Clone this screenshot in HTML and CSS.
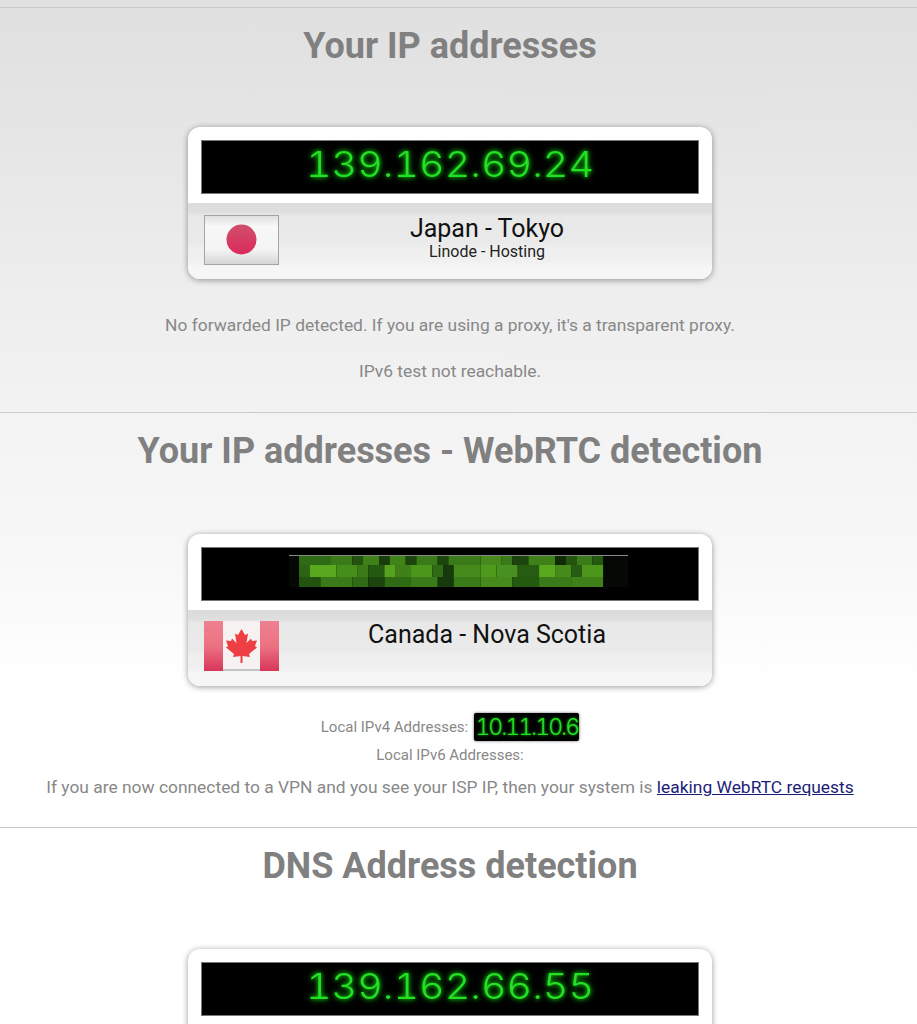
FILE: index.html
```html
<!DOCTYPE html>
<html lang="en">

<head>
  <meta charset="UTF-8" />
  <meta name="viewport" content="width=device-width, initial-scale=1.0" />
  <title>Your IP addresses</title>
  <link rel="stylesheet" href="styles.css">
</head>

<body>
  <div class="page">

    <!-- Browser IP -->
    <section class="block">
      <h2>Your IP addresses</h2>
      <div class="card">
        <div class="screen"><span class="digits">139.162.69.24</span></div>
        <div class="info">
          <svg class="flag" viewBox="0 0 75 50">
            <defs>
              <linearGradient id="jp-bg" x1="0" y1="0" x2="0" y2="1">
                <stop offset="0" stop-color="#dedede" />
                <stop offset="0.22" stop-color="#f8f8f8" />
                <stop offset="0.7" stop-color="#f4f4f4" />
                <stop offset="1" stop-color="#d4d4d4" />
              </linearGradient>
              <linearGradient id="jp-sun" x1="0" y1="0" x2="0" y2="1">
                <stop offset="0" stop-color="#d14f6c" />
                <stop offset="1" stop-color="#dc2a5c" />
              </linearGradient>
            </defs>
            <rect x="0.5" y="0.5" width="74" height="49" fill="url(#jp-bg)" stroke="#a4a4a4" />
            <circle cx="37.5" cy="24.5" r="15" fill="url(#jp-sun)" />
          </svg>
          <div class="place">
            <p class="country">Japan - Tokyo</p>
            <p class="isp">Linode - Hosting</p>
          </div>
        </div>
      </div>
      <p class="note note-first">No forwarded IP detected. If you are using a proxy, it's a transparent proxy.</p>
      <p class="note note-second">IPv6 test not reachable.</p>
    </section>

    <!-- WebRTC -->
    <section class="block block-webrtc">
      <h2>Your IP addresses - WebRTC detection</h2>
      <div class="card">
        <div class="screen">
          <svg class="blur" viewBox="0 0 339 34">
            <rect x="0" y="2" width="339" height="1" fill="#8a8a8a" />
            <rect x="0" y="3" width="339" height="31" fill="#050805" />
            <g class="pixels" transform="translate(10 0) scale(1.067 1) translate(-10 0)">
              <rect x="10" y="3" width="30" height="9" fill="#2f6a14" /><rect x="40" y="3" width="20" height="9" fill="#3a7a18" /><rect x="60" y="3" width="10" height="9" fill="#24520f" /><rect x="70" y="3" width="15" height="9" fill="#3f8019" /><rect x="85" y="3" width="10" height="9" fill="#183c0b" /><rect x="95" y="3" width="15" height="9" fill="#3f8419" /><rect x="110" y="3" width="10" height="9" fill="#1c440d" /><rect x="120" y="3" width="20" height="9" fill="#3a7a18" /><rect x="140" y="3" width="10" height="9" fill="#1c440d" /><rect x="150" y="3" width="30" height="9" fill="#3a7a18" /><rect x="180" y="3" width="20" height="9" fill="#458a1a" /><rect x="200" y="3" width="10" height="9" fill="#3a7a18" /><rect x="210" y="3" width="15" height="9" fill="#1c440d" /><rect x="225" y="3" width="25" height="9" fill="#3f8019" /><rect x="250" y="3" width="10" height="9" fill="#0f2c07" /><rect x="260" y="3" width="10" height="9" fill="#24520f" /><rect x="270" y="3" width="15" height="9" fill="#3a7a18" /><rect x="285" y="3" width="10" height="9" fill="#245a10" />
              <rect x="10" y="12" width="10" height="12" fill="#2d6414" /><rect x="20" y="12" width="25" height="12" fill="#5aa81e" /><rect x="45" y="12" width="20" height="12" fill="#468e1b" /><rect x="65" y="12" width="10" height="12" fill="#3a7a18" /><rect x="75" y="12" width="15" height="12" fill="#245a10" /><rect x="90" y="12" width="10" height="12" fill="#55a21d" /><rect x="100" y="12" width="15" height="12" fill="#3f8019" /><rect x="115" y="12" width="20" height="12" fill="#4c961c" /><rect x="135" y="12" width="10" height="12" fill="#2f6a14" /><rect x="145" y="12" width="10" height="12" fill="#163a0b" /><rect x="155" y="12" width="25" height="12" fill="#458a1a" /><rect x="180" y="12" width="15" height="12" fill="#4f9a1c" /><rect x="195" y="12" width="20" height="12" fill="#489020" /><rect x="215" y="12" width="20" height="12" fill="#265c11" /><rect x="235" y="12" width="15" height="12" fill="#5aa81e" /><rect x="250" y="12" width="15" height="12" fill="#458a1a" /><rect x="265" y="12" width="10" height="12" fill="#265c11" /><rect x="275" y="12" width="20" height="12" fill="#4c961c" />
              <rect x="10" y="24" width="20" height="10" fill="#24520f" /><rect x="30" y="24" width="30" height="10" fill="#3a7a18" /><rect x="60" y="24" width="15" height="10" fill="#2f6a14" /><rect x="75" y="24" width="15" height="10" fill="#1c440d" /><rect x="90" y="24" width="25" height="10" fill="#2f6a14" /><rect x="115" y="24" width="25" height="10" fill="#3a7a18" /><rect x="140" y="24" width="15" height="10" fill="#163a0b" /><rect x="155" y="24" width="25" height="10" fill="#3a7a18" /><rect x="180" y="24" width="30" height="10" fill="#458a1a" /><rect x="210" y="24" width="25" height="10" fill="#245a10" /><rect x="235" y="24" width="30" height="10" fill="#3a7a18" /><rect x="265" y="24" width="30" height="10" fill="#3f8019" />
            </g>
          </svg>
        </div>
        <div class="info">
          <svg class="flag" viewBox="0 0 75 50">
            <defs>
              <linearGradient id="ca-bar" x1="0" y1="0" x2="0" y2="1">
                <stop offset="0" stop-color="#ee8090" />
                <stop offset="0.5" stop-color="#ec7282" />
                <stop offset="1" stop-color="#d8365a" />
              </linearGradient>
            </defs>
            <rect width="75" height="50" fill="#f6f2f2" />
            <rect y="48" width="75" height="2" fill="#c4c4c4" />
            <rect width="19" height="50" fill="url(#ca-bar)" />
            <rect x="56" width="19" height="50" fill="url(#ca-bar)" />
            <path fill="#ee3f44" d="M37.5 8 41 14 44 12.5 42.5 22 47 17.5 48 20 53 19.5 51 25 53 26.5 45 33 46 36 38.5 35 38.5 42 36.5 42 36.5 35 29 36 30 33 22 26.5 24 25 22 19.5 27 20 28 17.5 32.5 22 31 12.5 34 14Z" />
          </svg>
          <div class="place">
            <p class="country">Canada - Nova Scotia</p>
          </div>
        </div>
      </div>
      <div class="local">
        <span>Local IPv4 Addresses:</span>
        <span class="pill">10.11.10.6</span>
      </div>
      <p class="local local-six">Local IPv6 Addresses:</p>
      <p class="note note-leak">If you are now connected to a VPN and you see your ISP IP, then your system is <a href="#">leaking WebRTC requests</a></p>
    </section>

    <!-- DNS -->
    <section class="block block-dns">
      <h2>DNS Address detection</h2>
      <div class="card">
        <div class="screen"><span class="digits">139.162.66.55</span></div>
        <div class="info"></div>
      </div>
    </section>

  </div>
</body>

</html>
```

FILE: styles.css
```css
html,
body {
  margin: 0;
  height: 100%;
}

body {
  background: #fff;
  font-family: Roboto, sans-serif;
}

.page {
  height: 1024px;
  overflow: hidden;
  padding-top: 7px;
  box-sizing: border-box;
  background: linear-gradient(180deg, #e0e0e0 0, #e4e4e4 100px, #ededed 280px, #f3f3f3 420px, #f8f8f8 560px, #ffffff 690px);
}

.block {
  border-top: 1px solid #c9c9c9;
  height: 404px;
  padding-right: 17px;
  box-sizing: content-box;
}

.block-webrtc {
  height: 414px;
}

.block-dns {
  height: auto;
}

h2 {
  margin: 17px 0 0;
  font-size: 36px;
  line-height: 42px;
  font-weight: 700;
  color: #808080;
  text-align: center;
}

.card {
  width: 524px;
  height: 152px;
  margin: 60px auto 0;
  border-radius: 12px;
  overflow: hidden;
  background: #fff;
  box-shadow: 0 1px 6px rgba(0, 0, 0, 0.4);
  display: flex;
  flex-direction: column;
}

.block-webrtc .card,
.block-dns .card {
  margin-top: 62px;
}

.screen {
  height: 54px;
  flex: none;
  margin: 13px 13px 9px;
  padding-bottom: 6px;
  box-sizing: border-box;
  background: #000;
  border: 1px solid #777;
  display: flex;
  align-items: center;
  justify-content: center;
}

.digits {
  font-family: Inter, sans-serif;
  font-weight: 300;
  font-size: 36px;
  line-height: 1;
  font-variant-numeric: tabular-nums;
  color: #24e024;
  text-shadow: 0 0 4px #14c814, 0 0 7px #0c8f0c;
  transform: scaleX(1.1);
}

.blur {
  width: 339px;
  height: 34px;
  margin: 0 0 2px 16px;
}

.pixels {
  filter: blur(0.5px);
}

.info {
  flex: 1;
  display: flex;
  align-items: flex-start;
  padding: 12px 17px 0 16px;
  background: linear-gradient(180deg, #dcdcdc 0, #dedede 9px, #e8e8e8 13px, #eaeaea 40px, #efefef 46px, #f0f0f0 58px, #f6f6f6 64px);
}

.block-webrtc .info {
  padding-top: 11px;
}

.flag {
  width: 75px;
  height: 50px;
  flex: none;
}

.place {
  flex: 1;
  padding-top: 1px;
  text-align: center;
  color: #111;
}

.country,
.isp {
  margin: 0;
}

.country {
  font-size: 25px;
  line-height: 26px;
}

.isp {
  margin-top: 1px;
  font-size: 16px;
  line-height: 18px;
  color: #222;
}

.note {
  margin: 0;
  font-size: 17.4px;
  line-height: 20px;
  color: #888;
  text-align: center;
}

.note-first {
  margin-top: 36px;
}

.note-second {
  margin-top: 26px;
}

.note-leak {
  margin-top: 12px;
}

.note a {
  color: #1c1c78;
}

.local {
  display: flex;
  justify-content: center;
  align-items: center;
  gap: 6px;
  margin: 27px 0 0;
  font-size: 15px;
  color: #888;
  text-align: center;
}

.local-six {
  margin-top: 4px;
  line-height: 20px;
}

.pill {
  width: 105px;
  height: 28px;
  background: #000;
  border-radius: 2px;
  font-family: Inter, sans-serif;
  font-weight: 300;
  font-size: 23px;
  line-height: 28px;
  letter-spacing: -2px;
  font-variant-numeric: tabular-nums;
  color: #24e024;
  text-shadow: 0 0 3px #14c814;
  box-shadow: 0 0 3px rgba(0, 0, 0, 0.6);
}
```
